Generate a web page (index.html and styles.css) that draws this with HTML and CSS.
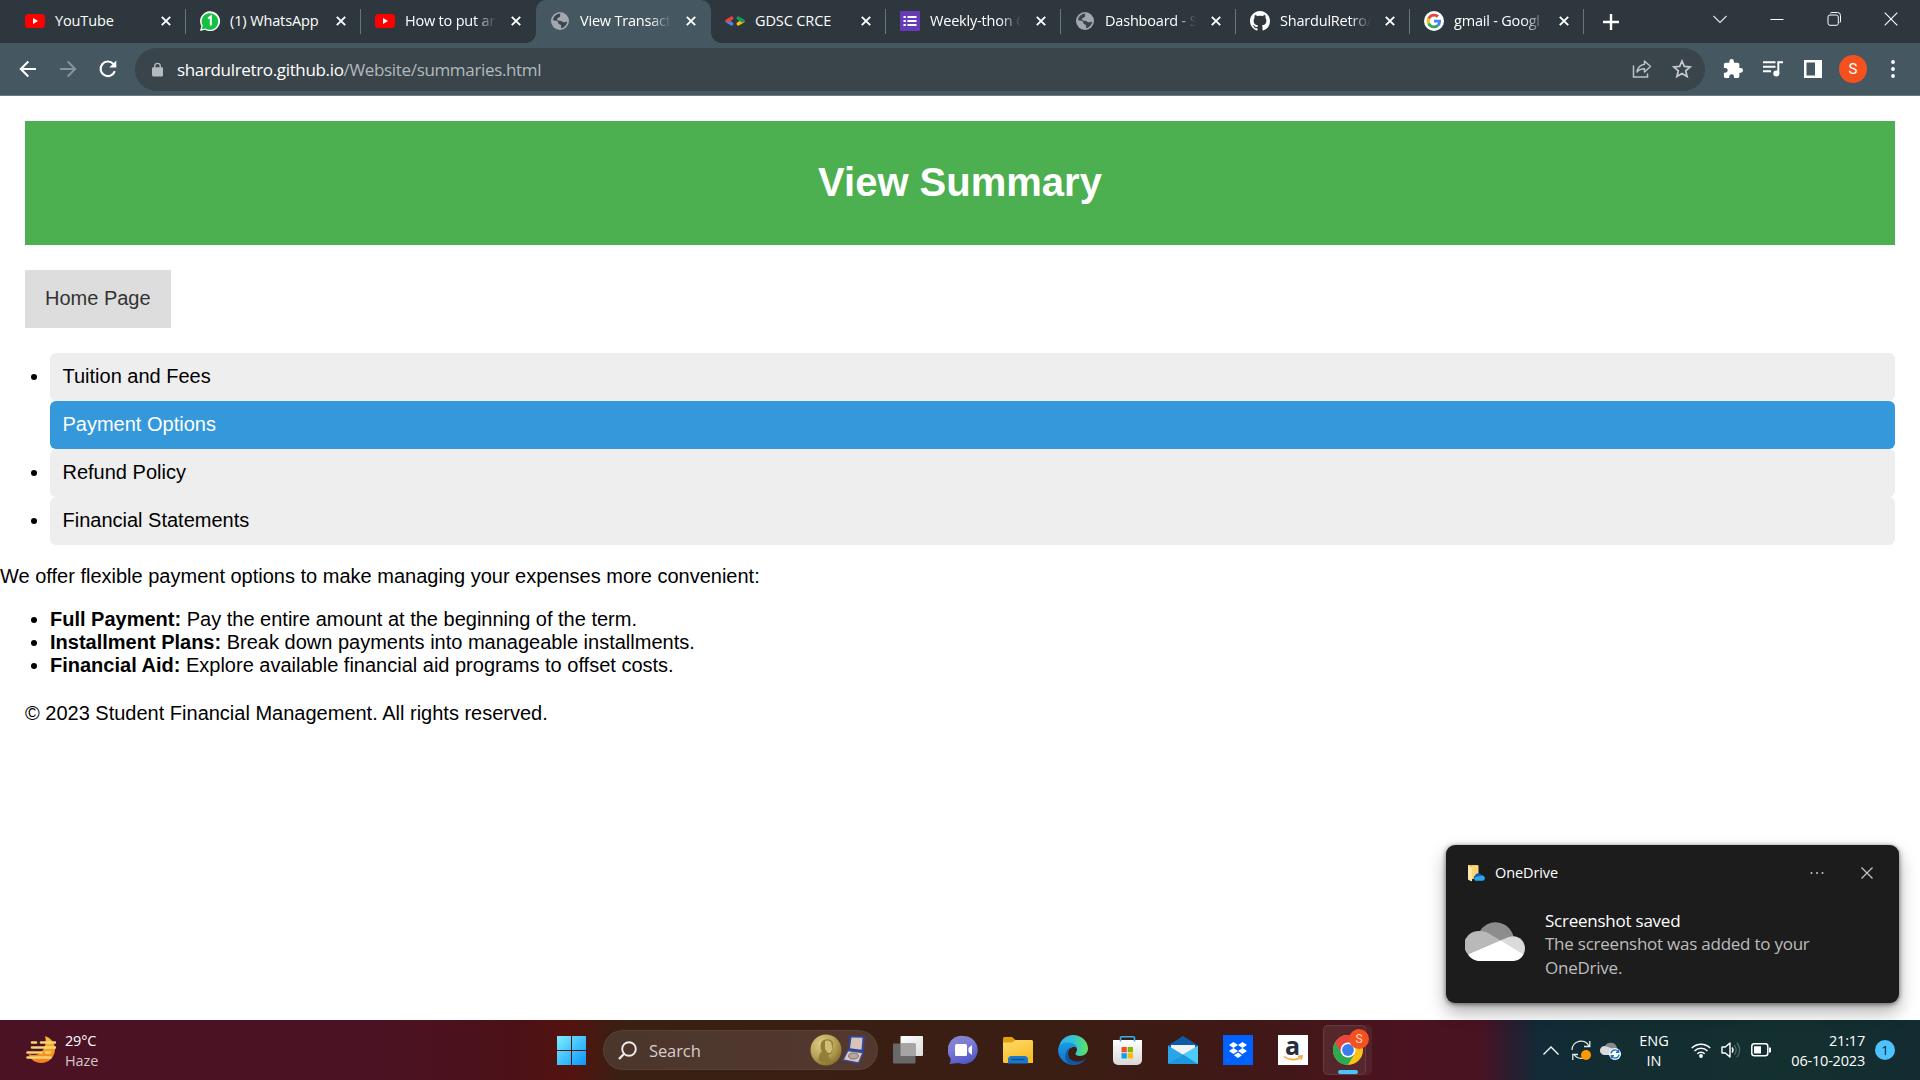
FILE: index.html
```html
<!DOCTYPE html>
<html lang="en">
<head>
<meta charset="utf-8">
<title>View Transactions</title>
<link rel="stylesheet" href="styles.css">
</head>
<body>
<svg class="defs" width="0" height="0" aria-hidden="true">
  <symbol id="x" viewBox="0 0 10 10"><path d="M.8.8l8.400 8.400M9.200.8L.8 9.200" stroke="#fff" stroke-width="1.900" fill="none"/></symbol>
  <symbol id="yt" viewBox="0 0 20 20"><rect y="3" width="20" height="14" rx="3.500" fill="#f00"/><path d="M8 7l5 3-5 3z" fill="#fff"/></symbol>
  <symbol id="globe" viewBox="0 0 20 20"><circle cx="10" cy="10" r="9" fill="#a3a8ac"/><path d="M10.500 2.500c-1 1.500.5 2.300-.8 3.500-1.200 1-2.700.8-2.700 2.200 0 1.200 1.500 1.500 3 1.500 2 0 2 1.300 3.400 1.600 1.300.2 2.200-.6 3.800-.6-.4 3.300-3 6-6.200 6.400-.3-1.200.6-2-.2-3.200-.8-1-2.500-.5-2.500-2 0-1.300-.8-1.900-2.200-2.100L3 9.300C3.300 5.500 6.500 2.700 10.500 2.500z" fill="#3b464c"/><path d="M10 5.500l3-2.500 3 2.500-2 1.500-2 1z" fill="#a3a8ac"/></symbol>
</svg>

<div class="tabstrip">
  <div class="tab">
    <svg class="fav"><use href="#yt"/></svg><span class="title">YouTube</span><svg class="close"><use href="#x"/></svg>
  </div>
  <div class="tab">
    <svg class="fav" viewBox="0 0 20 20"><path d="M0 20l1.300-5A10 10 0 1 1 5 18.800z" fill="#fff"/><path d="M1.800 18.300l.9-3.700A8.300 8.300 0 1 1 5.300 17.400z" fill="#15bf42"/><path d="M8 7.500l2.800-2V14.500" stroke="#fff" stroke-width="2" fill="none"/></svg><span class="title">(1) WhatsApp</span><svg class="close"><use href="#x"/></svg>
  </div>
  <div class="tab last-before">
    <svg class="fav"><use href="#yt"/></svg><span class="title fade">How to put ar</span><svg class="close"><use href="#x"/></svg>
  </div>
  <div class="tab active">
    <svg class="fav"><use href="#globe"/></svg><span class="title fade">View Transact</span><svg class="close"><use href="#x"/></svg>
  </div>
  <div class="tab">
    <svg class="fav" viewBox="0 0 20 20"><g stroke-width="3.600" stroke-linecap="round"><path d="M2.300 10.300l4.300 2.500" stroke="#4285f4"/><path d="M2.300 9.700l4.300-2.500" stroke="#ea4335"/><path d="M17.700 10.300l-4.300 2.500" stroke="#fbbc04"/><path d="M17.700 9.700l-4.300-2.500" stroke="#0f9d58"/></g></svg><span class="title">GDSC CRCE</span><svg class="close"><use href="#x"/></svg>
  </div>
  <div class="tab">
    <svg class="fav" viewBox="0 0 20 20"><rect width="20" height="20" rx="1" fill="#673ab7"/><path d="M7.500 6h9M7.500 10h9M7.500 14h9M3.500 6h2.300M3.500 10h2.300M3.500 14h2.300" stroke="#fff" stroke-width="2.200"/></svg><span class="title fade">Weekly-thon C</span><svg class="close"><use href="#x"/></svg>
  </div>
  <div class="tab">
    <svg class="fav"><use href="#globe"/></svg><span class="title fade">Dashboard - S</span><svg class="close"><use href="#x"/></svg>
  </div>
  <div class="tab narrow">
    <svg class="fav" viewBox="0 0 16 16"><path fill="#fff" d="M8 0C3.580 0 0 3.580 0 8c0 3.540 2.290 6.530 5.470 7.590.4.070.55-.17.55-.38 0-.19-.01-.82-.01-1.490-2.010.37-2.530-.49-2.690-.94-.09-.23-.48-.94-.82-1.130-.28-.15-.68-.52-.01-.53.63-.01 1.080.58 1.230.82.72 1.210 1.870.87 2.330.66.07-.52.28-.87.51-1.070-1.780-.2-3.640-.89-3.640-3.950 0-.87.31-1.590.82-2.150-.08-.2-.36-1.020.08-2.120 0 0 .67-.21 2.200.82.64-.18 1.320-.27 2-.27s1.360.09 2 .27c1.530-1.040 2.200-.82 2.200-.82.44 1.100.16 1.920.08 2.120.51.56.82 1.270.82 2.150 0 3.070-1.870 3.750-3.650 3.950.29.25.54.73.54 1.480 0 1.070-.01 1.930-.01 2.200 0 .21.15.46.55.38A8.010 8.010 0 0 0 16 8c0-4.420-3.580-8-8-8z"/></svg><span class="title fade">ShardulRetro/</span><svg class="close"><use href="#x"/></svg>
  </div>
  <div class="tab narrow">
    <svg class="fav" viewBox="0 0 48 48"><circle cx="24" cy="24" r="24" fill="#fff"/><g transform="translate(6.500 6.500) scale(.73)"><path fill="#ea4335" d="M24 9.500c3.540 0 6.710 1.220 9.210 3.600l6.850-6.850C35.900 2.380 30.470 0 24 0 14.620 0 6.510 5.380 2.560 13.220l7.980 6.190C12.430 13.720 17.740 9.500 24 9.500z"/><path fill="#4285f4" d="M46.980 24.550c0-1.570-.15-3.090-.38-4.550H24v9.020h12.940c-.58 2.960-2.260 5.480-4.780 7.180l7.730 6c4.510-4.180 7.090-10.360 7.090-17.650z"/><path fill="#fbbc05" d="M10.530 28.590c-.48-1.450-.76-2.990-.76-4.590s.27-3.140.76-4.590l-7.980-6.190C.92 16.460 0 20.120 0 24c0 3.880.92 7.540 2.560 10.780l7.970-6.190z"/><path fill="#34a853" d="M24 48c6.480 0 11.930-2.130 15.890-5.810l-7.730-6c-2.150 1.450-4.920 2.300-8.160 2.300-6.260 0-11.570-4.220-13.470-9.910l-7.980 6.190C6.510 42.620 14.620 48 24 48z"/></g></svg><span class="title fade">gmail - Googl</span><svg class="close"><use href="#x"/></svg>
  </div>
  <svg class="plus" viewBox="0 0 16 16"><path d="M8 0v16M0 8h16" stroke="#fff" stroke-width="2.400"/></svg>
  <div class="window-controls">
    <svg viewBox="0 0 14 14"><path d="M.5 4L7 10.500 13.500 4" fill="none" stroke="#e3e6e8" stroke-width="1.100"/></svg>
    <svg viewBox="0 0 14 14"><path d="M.5 7.500h13" stroke="#fff"/></svg>
    <svg viewBox="0 0 14 14"><rect x="1" y="3" width="10.300" height="10.300" rx="2" fill="none" stroke="#fff"/><path d="M3.200 1.200c.4-.5 1-.7 1.600-.7h5.700a3 3 0 0 1 3 3v5.700c0 .6-.3 1.200-.7 1.600" fill="none" stroke="#fff"/></svg>
    <svg viewBox="0 0 14 14"><path d="M.7.700l12.600 12.600M13.300.7L.7 13.300" stroke="#fff" stroke-width="1.100"/></svg>
  </div>
</div>

<div class="toolbar">
  <svg class="nav" viewBox="0 0 20 20"><path d="M18 10H3M10.300 2.500L2.800 10l7.500 7.500" fill="none" stroke="#fff" stroke-width="2"/></svg>
  <svg class="nav" viewBox="0 0 20 20"><path d="M2 10h15M9.700 2.500l7.500 7.500-7.500 7.500" fill="none" stroke="#87929a" stroke-width="2"/></svg>
  <svg class="nav" viewBox="0 0 20 20"><path d="M16.800 12.200A7.300 7.300 0 1 1 15.400 5" fill="none" stroke="#fff" stroke-width="2.100"/><path d="M18.300 1.500v7h-7z" fill="#fff"/></svg>
  <div class="omnibox">
    <svg class="lock" viewBox="0 0 12 15"><path d="M1.500 5h9A1.300 1.300 0 0 1 12 6.300v7A1.400 1.400 0 0 1 10.600 15H1.400A1.400 1.400 0 0 1 0 13.500v-7A1.400 1.400 0 0 1 1.500 5z" fill="#b5babd"/><path d="M3 6V3.800a3 3 0 0 1 6 0V6" fill="none" stroke="#b5babd" stroke-width="1.500"/></svg>
    <span class="url"><b>shardulretro.github.io</b>/Website/summaries.html</span>
    <svg class="share" viewBox="0 0 20 20"><path d="M1.500 6.500v11.500h14v-3.500" fill="none" stroke="#bcc1c4" stroke-width="1.500"/><path d="M12.500 2l6 5.500-6 5.500V9.800c-3.500 0-5.800.9-7.500 3.200.6-4 3-7 7.500-7.700z" fill="none" stroke="#bcc1c4" stroke-width="1.500" stroke-linejoin="round"/></svg>
    <svg class="star" viewBox="0 0 20 20"><path d="M10 2l2.300 5.400 5.900.5-4.500 3.900 1.400 5.700-5.100-3-5.100 3 1.400-5.700L1.800 7.900l5.900-.5z" fill="none" stroke="#c5c9cc" stroke-width="1.700"/></svg>
  </div>
  <div class="actions">
    <svg viewBox="1 1 22 22"><path fill="#fff" d="M20.500 11H19V7c0-1.100-.9-2-2-2h-4V3.500a2.500 2.500 0 0 0-5 0V5H4c-1.100 0-2 .9-2 2v3.800h1.500a2.700 2.700 0 0 1 0 5.400H2V20c0 1.100.9 2 2 2h3.800v-1.500a2.700 2.700 0 0 1 5.400 0V22H17c1.100 0 2-.9 2-2v-4h1.500a2.500 2.500 0 0 0 0-5z"/></svg>
    <svg viewBox="0 0 20 20"><path d="M0 3.200h12.500M0 7.700h12.500M0 12.200h8M15.300 15V3.200H20" fill="none" stroke="#fff" stroke-width="2"/><circle cx="13.300" cy="14.500" r="3" fill="#fff"/></svg>
    <svg viewBox="0 0 20 20"><path fill="#fff" fill-rule="evenodd" d="M1 1h18v18H1zM3.500 3.500v13h8.500v-13z"/></svg>
    <span class="avatar">S</span>
    <svg class="more" viewBox="0 0 20 20"><circle cx="10" cy="3" r="1.900" fill="#fff"/><circle cx="10" cy="10" r="1.900" fill="#fff"/><circle cx="10" cy="17" r="1.900" fill="#fff"/></svg>
  </div>
</div>

<main class="page">
  <header class="banner"><h1>View Summary</h1></header>
  <nav class="menu"><a>Home Page</a></nav>
  <ul class="topics">
    <li>Tuition and Fees</li>
    <li class="selected">Payment Options</li>
    <li>Refund Policy</li>
    <li>Financial Statements</li>
  </ul>
  <p>We offer flexible payment options to make managing your expenses more convenient:</p>
  <ul class="options">
    <li><strong>Full Payment:</strong> Pay the entire amount at the beginning of the term.</li>
    <li><strong>Installment Plans:</strong> Break down payments into manageable installments.</li>
    <li><strong>Financial Aid:</strong> Explore available financial aid programs to offset costs.</li>
  </ul>
  <footer>© 2023 Student Financial Management. All rights reserved.</footer>
</main>

<aside class="toast">
  <div class="toast-head">
    <svg class="toast-app" viewBox="0 0 18 18"><path d="M1 1h10v14H1z" fill="#e8b93f"/><path d="M1 1l4 2.500V17l-1 .3L1 15.500z" fill="#ffe8a3"/><path d="M5 1.500h6.500v13.500H5z" fill="#f9d775"/><path d="M8.500 16.700a3 3 0 0 1-.8-5 4 4 0 0 1 7-.8l2 2z" fill="#0f60b8"/><path d="M8.500 16.700a2.300 2.300 0 0 1 0-3.700l6-1.200a2.500 2.500 0 0 1 1.500 4.900z" fill="#28a8ea"/></svg>
    <span class="toast-name">OneDrive</span>
    <svg class="toast-more" viewBox="0 0 14 4"><circle cx="1.500" cy="2" r="1" fill="#c8c8c8"/><circle cx="7" cy="2" r="1" fill="#c8c8c8"/><circle cx="12.500" cy="2" r="1" fill="#c8c8c8"/></svg>
    <svg class="toast-close" viewBox="0 0 12 12"><path d="M.5.500l11 11M11.500.5l-11 11" stroke="#c8c8c8" stroke-width="1.200"/></svg>
  </div>
  <div class="toast-body">
    <svg class="cloud" viewBox="0 0 60 39"><path d="M14 10.500a18.500 18.500 0 0 1 34.500 4L36 20z" fill="#8d8d8d"/><path d="M3 32.500A14 14 0 0 1 14.500 9c3.500-.3 7 .8 9.500 2.500L35.500 18.500 22 28z" fill="#b9b9b9"/><path d="M35 18.500l9-3.500c8-3 16 3 16 11.500 0 2-.5 4-1.500 6L44 28z" fill="#dadada"/><path d="M3 32.500l32.500-14L58.500 32.500C56 37 52 39 47.500 39H14.500C10 39 5.500 36.500 3 32.500z" fill="#fff"/></svg>
    <div class="toast-text"><strong>Screenshot saved</strong><span>The screenshot was added to your</span><span>OneDrive.</span></div>
  </div>
</aside>

<div class="taskbar">
  <div class="weather">
    <svg viewBox="0 0 30 28"><defs><linearGradient id="moon" x2="0" y2="1"><stop stop-color="#fbc02d"/><stop offset="1" stop-color="#f57c1a"/></linearGradient></defs><path d="M19 0c6 2 10 7 10 13 0 8-6 14-14 14-6 0-11-4-12.500-9C8 20 14 19 17 14c2.500-4 3.500-9 2-14z" fill="url(#moon)"/><path d="M6 6.500h4M15 6.500h14M6 11.500h23M1.500 16.500h14M20 16.500h4M1.500 21.500h23" stroke="#f6d375" stroke-width="2.600" stroke-linecap="round"/></svg>
    <div><span>29°C</span><span class="dim">Haze</span></div>
  </div>
  <div class="task start"><svg viewBox="0 0 29 29"><defs><linearGradient id="win" x2="1" y2="1"><stop stop-color="#7eedff"/><stop offset="1" stop-color="#0a97fb"/></linearGradient></defs><path d="M0 0h14v14H0zM15 0h14v14H15zM0 15h14v14H0zM15 15h14v14H15z" fill="url(#win)"/></svg></div>
  <div class="search">
    <svg class="lens" viewBox="0 0 19 19"><circle cx="11" cy="8" r="6.800" fill="none" stroke="#f0eceb" stroke-width="1.900"/><path d="M6.200 12.800L1 18" stroke="#f0eceb" stroke-width="2.300"/></svg>
    <span>Search</span>
    <svg class="medal" viewBox="0 0 56 32"><defs><radialGradient id="gold" cx=".35" cy=".3" r=".75"><stop stop-color="#dccd88"/><stop offset=".6" stop-color="#b7a253"/><stop offset="1" stop-color="#85702f"/></radialGradient></defs><circle cx="16" cy="16" r="15.500" fill="url(#gold)"/><path d="M11 9c1-4 8-5 11-2 1.500 2 1 4 .5 5.500l1.500 3-1.500.8c.2 3-1 4-3.500 4l-.5 2.500 4 4.500c-4 2-10 2-14-1 0-4 1-7 3.500-9-1.500-2-2-5-1-8.300z" fill="#937e39"/><path d="M15 7c3-1.500 6 0 6.500 2.500l.5 3.500 1 2.500-1.500.5v2.500l-3.500.5-3-4z" fill="#d0be76"/><path d="M39.500 1.500L55 2l-1.500 16.500L38.500 16z" fill="#30479a"/><path d="M41.500 3.500l11 .3-1 12-11.500-1.500z" fill="#d9c4ba"/><path d="M38 16.500l15 2-4.500 10.500L33 26z" fill="#dfc9bd" stroke="#394c9b" stroke-width="1.300"/><ellipse cx="43.500" cy="22" rx="5" ry="3" fill="#b9a79f" stroke="#7b6c69"/></svg>
  </div>
  <div class="apps">
    <div class="task"><svg viewBox="0 0 30 30"><defs><linearGradient id="tv" x2="1" y2="1"><stop stop-color="#fff"/><stop offset="1" stop-color="#dcdcdc"/></linearGradient></defs><rect x="7.500" y="1" width="22.500" height="20" rx="1" fill="url(#tv)"/><rect y="8.500" width="22.500" height="20" rx="1" fill="#686868"/><path d="M7.500 8.500h15V21h-15z" fill="#a6a5a4"/></svg></div>
    <div class="task"><svg viewBox="0 0 30 30"><defs><linearGradient id="chat" x1=".2" x2=".6" y2="1"><stop stop-color="#8586c9"/><stop offset=".4" stop-color="#7e7bd8"/><stop offset="1" stop-color="#5057c6"/></linearGradient></defs><path d="M15.500 1a14 14 0 1 1-5 27L1.500 29c1-2 1.500-4 .8-6A14 14 0 0 1 15.500 1z" fill="url(#chat)"/><rect x="7" y="9" width="12" height="12" rx="1.500" fill="#fff"/><path d="M20.500 13l3.500-3v10l-3.500-3z" fill="#fff"/></svg></div>
    <div class="task"><svg viewBox="0 0 30 30"><defs><linearGradient id="fold" x2=".5" y2="1"><stop stop-color="#ffda6a"/><stop offset="1" stop-color="#f8bd2a"/></linearGradient></defs><path d="M1.500 2H9l4 3.500V10H0V3.500A1.500 1.500 0 0 1 1.500 2z" fill="#e3a008"/><path d="M0 7.500h9l3.500-2.500H29l1 1v22H1l-1-1z" fill="url(#fold)"/><path d="M5 28.500v-4A3.500 3.500 0 0 1 8.500 21h13a3.500 3.500 0 0 1 3.500 3.500v4z" fill="#1a78c8"/><path d="M8.500 24.500h13" stroke="#0c4e8a" stroke-width="1.200"/></svg></div>
    <div class="task"><svg viewBox="0 0 30 30"><defs><linearGradient id="e1" x2="1"><stop stop-color="#2fb0ec"/><stop offset=".5" stop-color="#31c3d5"/><stop offset="1" stop-color="#62e459"/></linearGradient><linearGradient id="e2" x2="0" y2="1"><stop stop-color="#1c9be3"/><stop offset="1" stop-color="#0f70cf"/></linearGradient></defs><path d="M1 12C2 5 8 0 15 0c9 0 15 6.500 15 13.500 0 4.500-3.500 7.500-8 7.500-3 0-5-1-4.500-2.500s1.500-2 1.500-4c0-3-3-6-7-6C7 8.500 3 10 1 12z" fill="url(#e1)"/><path d="M0 14.500C1 9 5 7.500 10 7.500c6 0 9 3.500 9 6-2-3-9-1.500-9 5 0 5 4 10 9 11-10 2-19-5-19-15z" fill="url(#e2)"/><path d="M12.500 12.500c-6 5-2 13 5.500 14 4 .5 8-1 10-3.500-2 4.500-7 7-12.500 7-5 0-9-5-8-10 .5-4 2.500-6.500 5-7.500z" fill="#12559f"/></svg></div>
    <div class="task"><svg viewBox="1 0 30 30"><defs><linearGradient id="bag" x2="0" y2="1"><stop stop-color="#fff"/><stop offset="1" stop-color="#d8d8d8"/></linearGradient></defs><path d="M1 5h29v20a5 5 0 0 1-5 5H6a5 5 0 0 1-5-5z" fill="url(#bag)"/><path d="M8.500 6.500V3a1.300 1.300 0 0 1 1.300-1.300h11.400A1.300 1.300 0 0 1 22.500 3v3.500" fill="none" stroke="#2fb3ea" stroke-width="1.600"/><path d="M9.500 12h5.300v5.300H9.500z" fill="#f25022"/><path d="M15.700 12H21v5.300h-5.300z" fill="#7fba00"/><path d="M9.500 18.200h5.300v5.300H9.500z" fill="#00a4ef"/><path d="M15.700 18.200H21v5.300h-5.300z" fill="#ffb900"/></svg></div>
    <div class="task"><svg viewBox="0 0 30 30"><path d="M0 10.500L15 1l15 9.500-15 12z" fill="#0e5aa7"/><path d="M3 10h24v7L15 24 3 17z" fill="#f2f2f2"/><path d="M0 10.500L30 29H1.500A1.500 1.500 0 0 1 0 27.500z" fill="#2aa6e8"/><path d="M30 10.500V29h-2L9 23z" fill="#4fcbf7"/><path d="M0 29l15-9.500L30 29z" fill="#1c97e0"/></svg></div>
    <div class="task"><svg viewBox="0 0 30 30"><path d="M0 0h30v30H0z" fill="#0061ff"/><path d="M10.500 7l4.500 3-4.500 3L6 10zM19.500 7l4.500 3-4.500 3-4.500-3zM10.500 13l4.500 3-4.500 3L6 16zM19.500 13l4.500 3-4.500 3-4.500-3zM15 17.500l4 2.700-4 2.800-4-2.800z" fill="#fff"/></svg></div>
    <div class="task"><div class="amazon"><span>a</span><svg viewBox="0 0 20 7"><path d="M1 1.500c5 4 12 4 16.500 1M15 1.300l4-.3-.8 3.700" fill="none" stroke="#f7a535" stroke-width="1.600"/></svg></div></div>
    <div class="task running"><svg viewBox="0 0 30 30"><circle cx="15" cy="15" r="15" fill="#fbc116"/><path d="M15 15L2 7.500A15 15 0 0 0 15 30l6.500-11.300z" fill="#2da94f"/><path d="M2 7.500A15 15 0 0 1 28 7.500H15l-6.500 11.200z" fill="#e8453c"/><circle cx="15" cy="15" r="7.500" fill="#fff"/><circle cx="15" cy="15" r="5.900" fill="#3b7ded"/></svg><span class="profile">S</span></div>
  </div>
  <div class="tray">
    <svg class="up" viewBox="0 0 16 9"><path d="M.5 8.500L8 1l7.500 7.500" fill="none" stroke="#fff" stroke-width="1.300"/></svg>
    <svg class="i20 sync" viewBox="0 0 20 20"><path d="M1 10a9 9 0 0 1 17-4M18.800 1v5.500H13M17 15.500a9 9 0 0 1-14-1M1.800 20v-5.500H7" fill="none" stroke="#e6eaea" stroke-width="1.300"/><circle cx="15" cy="15" r="5" fill="#ff9800"/></svg>
    <svg class="i21" viewBox="0 0 21 20"><path d="M5 6a6.500 6.500 0 0 1 12 2l-3 5-9-4z" fill="#858b8d"/><path d="M4 15a4.500 4.500 0 0 1 1-9l9 3-3 6z" fill="#d8dadb"/><circle cx="15" cy="14" r="6" fill="#fff"/><path d="M11 13.500a4 4 0 0 1 7.500-1.500M19 14.500a4 4 0 0 1-7.500 1.500M18.700 9.500v2.700h-2.700M11.300 18.500v-2.700H14" fill="none" stroke="#1677cf" stroke-width="1.400"/></svg>
    <div class="lang"><span>ENG</span><span>IN</span></div>
    <svg class="i20 wifi" viewBox="0 0 20 16"><path d="M.8 6a13.200 13.200 0 0 1 18.400 0M3.500 9a9.300 9.300 0 0 1 13 0M6.300 11.800a5.300 5.300 0 0 1 7.400 0" fill="none" stroke="#fff" stroke-width="1.500"/><circle cx="10" cy="14" r="1.900" fill="#fff"/></svg>
    <svg class="i20 vol" viewBox="0 0 20 18"><path d="M1 6h3.300L9 2v14l-4.700-4H1z" fill="none" stroke="#fff" stroke-width="1.400" stroke-linejoin="round"/><path d="M11 6.500a4 4 0 0 1 0 5" fill="none" stroke="#fff" stroke-width="1.400"/><path d="M13.300 4.200a7 7 0 0 1 0 9.600M15.800 1.800a10.500 10.500 0 0 1 0 14.400" fill="none" stroke="#53686a" stroke-width="1.300"/></svg>
    <svg class="i20" viewBox="0 0 20 14"><rect x=".8" y=".8" width="16" height="12" rx="2.500" fill="none" stroke="#fff" stroke-width="1.500"/><path d="M3 3.200h7v7.300H3zM18 4.500h1.500l.5.500v4l-.5.500H18z" fill="#fff"/></svg>
    <div class="clock"><span>21:17</span><span>06-10-2023</span></div>
    <span class="count">1</span>
  </div>
</div>
</body>
</html>
```
FILE: styles.css
```css
* { box-sizing: border-box; }

body {
  margin: 0;
  width: 1920px;
  height: 1080px;
  overflow: hidden;
  display: flex;
  flex-direction: column;
  background: #fff;
  color: #000;
  font-family: "Open Sans", "Noto Sans", sans-serif;
}

svg { display: block; flex: none; }
.defs { position: absolute; }

/* Browser tabs */
.tabstrip {
  height: 43px;
  flex: none;
  display: flex;
  align-items: center;
  padding-left: 11px;
  background: #2d373d;
  color: #fff;
}

.tab {
  position: relative;
  width: 175px;
  height: 43px;
  flex: none;
  display: flex;
  align-items: center;
  padding: 0 15px 1px 14px;
}

.tab.narrow { width: 174px; }

.tab::after {
  content: "";
  position: absolute;
  right: 0;
  top: 9px;
  width: 1px;
  height: 25px;
  background: #69747b;
}

.tab.last-before::after { display: none; }

.tab.active {
  background: #455761;
  border-radius: 10px 10px 0 0;
}

.tab.active::before,
.tab.active::after {
  content: "";
  position: absolute;
  top: auto;
  bottom: 0;
  width: 10px;
  height: 10px;
}

.tab.active::before {
  left: -10px;
  background: radial-gradient(circle at 0 0, transparent 9.5px, #455761 10px);
}

.tab.active::after {
  right: -10px;
  background: radial-gradient(circle at 100% 0, transparent 9.5px, #455761 10px);
}

.fav { width: 20px; height: 20px; margin-right: 10px; }

.title {
  width: 96px;
  margin-right: 10px;
  white-space: nowrap;
  font-size: 14.5px;
  line-height: 22px;
  letter-spacing: -0.12px;
}

.title.fade {
  letter-spacing: -0.2px;
  -webkit-mask-image: linear-gradient(90deg, #000 70px, transparent 91px);
  mask-image: linear-gradient(90deg, #000 70px, transparent 91px);
}

.close { width: 10px; height: 10px; }
.plus { width: 16px; height: 16px; margin-left: 19px; }

.window-controls {
  display: flex;
  gap: 43px;
  margin: 0 22px 6px auto;
}

.window-controls svg { width: 14px; height: 14px; }

/* Browser toolbar */
.toolbar {
  height: 53px;
  flex: none;
  display: flex;
  align-items: center;
  padding-left: 17.5px;
  background: #455761;
  border-bottom: 1px solid #6b7981;
}

.nav { width: 20px; height: 20px; margin-right: 20px; }

.omnibox {
  width: 1570px;
  height: 43px;
  margin-left: -2.5px;
  display: flex;
  align-items: center;
  padding: 0 13px 0 16.5px;
  border-radius: 22px;
  background: #39454b;
}

.lock { width: 11px; height: 15px; }

.url {
  margin: 1px auto 0 14.5px;
  color: #b4b9bc;
  font-size: 17px;
  line-height: 24px;
  letter-spacing: -0.34px;
}

.url b { color: #fff; font-weight: 400; }
.share { width: 20px; height: 20px; margin-right: 20px; }
.star { width: 20px; height: 20px; }

.actions {
  display: flex;
  align-items: center;
  gap: 20px;
  margin-left: 17.5px;
}

.actions svg { width: 20px; height: 20px; }
.actions .more { margin-left: -3px; }

.avatar {
  width: 28px;
  height: 28px;
  margin: 0 -1px 0 -3.5px;
  border-radius: 50%;
  background: #f4511e;
  color: #fff;
  font: 15px/28px Roboto, sans-serif;
  text-align: center;
}

/* Web page */
.page {
  flex: 1;
  font: 20px/23px "Liberation Sans", Arial, sans-serif;
}

.banner {
  height: 124px;
  margin: 25px 25px 0;
  display: flex;
  align-items: center;
  justify-content: center;
  background: #4caf50;
  color: #fff;
}

.banner h1 { margin: 0 0 2px; font-size: 40px; line-height: 46px; }
.menu { display: flex; margin: 25px 25px 0; }

.menu a {
  padding: 17px 20px 18px;
  background: #ddd;
  color: #333;
}

.topics, .options { margin: 0; padding-left: 50px; }
.topics { margin: 25px 25px 0 0; }

.topics li {
  padding: 12px 12.5px 13px;
  border-radius: 6px;
  background: #eee;
}

.topics .selected {
  list-style: none;
  background: #3498db;
  color: #fff;
}

.page p { margin: 20px 0; }
.page footer { padding: 25px; }

/* Notification */
.toast {
  position: absolute;
  left: 1446px;
  top: 845px;
  width: 453px;
  height: 158px;
  padding: 19px 26.5px 0 19px;
  border-radius: 9px;
  background: #1c1c1c;
  box-shadow: 0 9px 18px rgba(0, 0, 0, .32), 0 1px 5px rgba(0, 0, 0, .55);
  color: #fff;
}

.toast-head { display: flex; align-items: center; height: 18px; }
.toast-app { width: 18px; height: 18px; margin: 0 10px 0 2px; }
.toast-name { font-size: 14.5px; line-height: 18px; letter-spacing: -0.1px; }
.toast-more { width: 14px; height: 4px; margin: 0 37px 0 auto; }
.toast-close { width: 12px; height: 12px; }
.toast-body { display: flex; margin-top: 27px; }
.cloud { width: 60px; height: 39px; margin: 13px 20px 0 0; }

.toast-text {
  font-size: 17px;
  line-height: 23.4px;
  white-space: nowrap;
  letter-spacing: -0.24px;
}

.toast-text strong, .toast-text span { display: block; font-weight: 400; }
.toast-text span { color: #bdbdbd; }

/* Taskbar */
.taskbar {
  height: 60px;
  flex: none;
  display: flex;
  align-items: center;
  background: linear-gradient(90deg, #4b1224 0, #4b1223 380px, #4c1117 520px, #53130f 570px, #3a1f13 620px, #3a1e13 1050px, #401816 1250px, #4b1320 1400px, #491322 1480px, #2c1c30 1510px, #112b38 1540px, #132d31 1620px, #13302f 1800px, #132b31 1920px);
  color: #fff;
  font-size: 15px;
  line-height: 20px;
}

.weather { width: 544px; padding-left: 26px; display: flex; align-items: center; }
.weather svg { width: 30px; height: 28px; margin-right: 9px; }
.weather div, .lang, .clock { font-size: 14.5px; padding-top: 1px; }
.weather span, .lang span, .clock span { display: block; }
.weather div { letter-spacing: -0.2px; }
.weather .dim { color: #d4c5ca; letter-spacing: -0.1px; }

.task {
  position: relative;
  width: 55px;
  height: 50px;
  flex: none;
  display: flex;
  align-items: center;
  justify-content: center;
}

.task svg { width: 30px; height: 30px; }
.task.start svg { width: 29px; height: 29px; }

.search {
  width: 275px;
  height: 40px;
  margin: 0 2px 0 4px;
  padding: 0 11px 0 14px;
  display: flex;
  align-items: center;
  border: 1px solid rgba(255, 255, 255, .05);
  border-radius: 20px;
  background: linear-gradient(90deg, #4b362c, #53382f);
  color: #d6cecb;
  font-size: 16.5px;
}

.search span { margin: 2px auto 0 12px; letter-spacing: -0.1px; }
.lens { width: 19px; height: 19px; }
.medal { width: 56px; height: 32px; }
.apps { display: flex; }

.amazon {
  width: 30px;
  height: 30px;
  background: #fff;
  color: #232f3e;
  text-align: center;
}

.amazon span { display: block; height: 19px; font: bold 25px/21px "Open Sans", sans-serif; }
.task .amazon svg { width: 20px; height: 7px; margin: 1px auto 0; }

.running::before {
  content: "";
  position: absolute;
  inset: 0 9px 0 3px;
  border: 1px solid rgba(255, 255, 255, .1);
  border-radius: 5px;
  background: rgba(255, 255, 255, .08);
  box-shadow: 6px 0 0 0 rgba(255, 255, 255, .06);
}

.running svg { position: relative; }

.running::after {
  content: "";
  position: absolute;
  left: 18px;
  bottom: 1px;
  width: 20px;
  height: 4px;
  border-radius: 2px;
  background: #4cc2ff;
}

.profile {
  position: absolute;
  left: 29px;
  top: 4px;
  width: 20px;
  height: 20px;
  border-radius: 50%;
  background: #f4511e;
  color: #ffd9cc;
  font: 12px/20px Roboto, sans-serif;
  text-align: center;
}

.tray { display: flex; align-items: center; margin: 0 25px 0 auto; }
.up { width: 16px; height: 9px; margin-right: 12px; }
.i20 { width: 20px; }
.sync { margin-right: 9px; }
.i21 { width: 21px; height: 20px; }
.lang { width: 66px; text-align: center; }
.wifi { margin: 0 10px 0 4px; }
.vol { margin-right: 10px; }
.clock { width: 94px; margin-right: 10px; text-align: right; letter-spacing: -0.2px; }

.count {
  width: 20px;
  height: 20px;
  border-radius: 50%;
  background: #4cc2ff;
  color: #10222c;
  font-size: 13.5px;
  line-height: 20px;
  text-align: center;
}
```
